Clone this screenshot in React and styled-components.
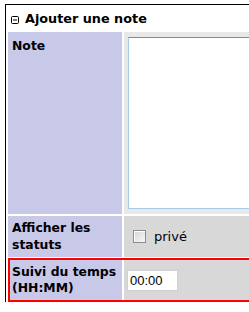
import React from 'react'
import styled, { createGlobalStyle } from 'styled-components'

const Global = createGlobalStyle`
  html, body {
    margin: 0;
    padding: 0;
    background: #fff;
    overflow: hidden;
  }
  body {
    font-family: "DejaVu Sans", Verdana, sans-serif;
    font-size: 13px;
    color: #000;
  }
`

const Frame = styled.div`
  margin: 4px 0 0 5px;
  width: 300px;
  border-top: 1px solid #000;
  border-left: 1px solid #000;
`

const Header = styled.div`
  height: 27px;
  display: flex;
  align-items: center;
  padding-left: 5px;
  gap: 6px;
  font-weight: bold;
  font-size: 12.8px;
  line-height: 16px;
`

const Toggle = styled.svg`
  width: 8px;
  height: 8px;
  margin-top: 2px;
  flex: none;
`

const Table = styled.div`
  display: flex;
  flex-direction: column;
  gap: 2px;
  padding-left: 2px;
`

const Row = styled.div`
  display: flex;
  gap: 2px;
  ${(p) => p.$highlight && `
    margin-top: -1px;
    min-height: 44px;
    outline: 2px solid #ff0000;
    outline-offset: -2px;
  `}
`

const Label = styled.div`
  width: 106px;
  flex: none;
  padding: ${(p) => (p.$top ? '6px 4px' : '4px')};
  background: #c8c8e8;
  font-weight: bold;
  font-size: 12.4px;
  line-height: 16.5px;
  display: flex;
  align-items: ${(p) => (p.$top ? 'flex-start' : 'center')};
`

const Field = styled.div`
  flex: 1;
  padding: ${(p) => (p.$top ? '5px 4px' : '4px')};
  background: ${(p) => (p.$light ? '#e8e8e8' : '#d8d8d8')};
  display: flex;
  align-items: ${(p) => (p.$top ? 'flex-start' : 'center')};
`

const NoteArea = styled.textarea`
  display: block;
  width: 170px;
  height: 172px;
  box-sizing: border-box;
  margin: 0;
  resize: none;
  background: #fff;
  border: 1px solid #a9cbe4;
  border-top-color: #5f93c0;
  border-radius: 0;
`

const Check = styled.input`
  appearance: none;
  width: 13px;
  height: 13px;
  margin: 0 8px 0 5px;
  border: 1px solid #8c8c8c;
  background: linear-gradient(135deg, #d4d4d4, #f8f8f8);
  box-shadow: inset 1px 1px 0 #fff;
  border-radius: 0;
`

const CheckText = styled.span`
  font-size: 13px;
  line-height: 16px;
`

const TimeInput = styled.input`
  width: 51px;
  height: 21px;
  box-sizing: border-box;
  margin: 1px 0 0 -1px;
  padding: 0 2px;
  border: 1px solid #d0d0d0;
  border-radius: 0;
  background: #fff;
  font-family: "Liberation Sans", Arial, sans-serif;
  font-size: 13px;
  color: #000;
`

export default function App() {
  return (
    <>
      <Global />
      <Frame>
        <Header>
          <Toggle viewBox="0 0 8 8">
            <rect x="0.5" y="0.5" width="7" height="7" rx="1" fill="#fff" stroke="#000" strokeWidth="1" />
            <line x1="2" y1="4" x2="6" y2="4" stroke="#000" strokeWidth="1" />
          </Toggle>
          Ajouter une note
        </Header>
        <Table>
          <Row>
            <Label $top>Note</Label>
            <Field $top $light>
              <NoteArea />
            </Field>
          </Row>
          <Row>
            <Label>Afficher les statuts</Label>
            <Field>
              <Check type="checkbox" />
              <CheckText>privé</CheckText>
            </Field>
          </Row>
          <Row $highlight>
            <Label>Suivi du temps (HH:MM)</Label>
            <Field>
              <TimeInput type="text" defaultValue="00:00" />
            </Field>
          </Row>
        </Table>
      </Frame>
    </>
  )
}
